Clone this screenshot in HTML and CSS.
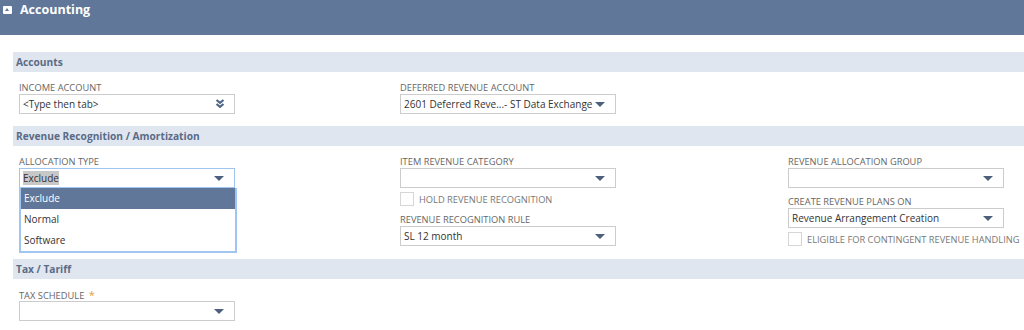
FILE: index.html
```html
<!DOCTYPE html>
<html lang="en">
<head>
	<meta charset="UTF-8">
	<title>Accounting</title>
	<link rel="stylesheet" href="styles.css">
</head>
<body>
<div class="tab-head">
    <i class="icon-collapse"></i>
    <span>Accounting</span>
</div>
<div class="tab-body">
    <div class="section">
        <div class="section-title">Accounts</div>
        <div class="section-grid">
            <div class="col">
                <div class="field">
                    <label>INCOME ACCOUNT</label>
                    <div class="input">
                        <span>&lt;Type then tab&gt;</span>
                        <svg class="icon-dbl" width="10" height="10" viewBox="0 0 10 10"><path d="M1.5 1 L5 3.8 L8.5 1 M1.5 5 L5 7.8 L8.5 5" fill="none" stroke="#4f6686" stroke-width="2.2"/></svg>
                    </div>
                </div>
            </div>
            <div class="col">
                <div class="field">
                    <label>DEFERRED REVENUE ACCOUNT</label>
                    <div class="input">
                        <span>2601 Deferred Reve...- ST Data Exchange</span>
                        <i class="arrow"></i>
                    </div>
                </div>
            </div>
            <div class="col"></div>
        </div>
    </div>

    <div class="section">
        <div class="section-title">Revenue Recognition / Amortization</div>
        <div class="section-grid">
            <div class="col">
                <div class="field drop-wrap">
                    <label>ALLOCATION TYPE</label>
                    <div class="input focus">
                        <span class="sel">Exclude</span>
                        <i class="arrow"></i>
                    </div>
                    <ul class="drop-list">
                        <li class="current">Exclude</li>
                        <li>Normal</li>
                        <li>Software</li>
                    </ul>
                </div>
            </div>
            <div class="col">
                <div class="field">
                    <label>ITEM REVENUE CATEGORY</label>
                    <div class="input">
                        <span></span>
                        <i class="arrow"></i>
                    </div>
                </div>
                <div class="check">
                    <i class="box"></i>
                    <span>HOLD REVENUE RECOGNITION</span>
                </div>
                <div class="field">
                    <label>REVENUE RECOGNITION RULE</label>
                    <div class="input">
                        <span>SL 12 month</span>
                        <i class="arrow"></i>
                    </div>
                </div>
            </div>
            <div class="col">
                <div class="field">
                    <label>REVENUE ALLOCATION GROUP</label>
                    <div class="input">
                        <span></span>
                        <i class="arrow"></i>
                    </div>
                </div>
                <div class="field">
                    <label>CREATE REVENUE PLANS ON</label>
                    <div class="input">
                        <span>Revenue Arrangement Creation</span>
                        <i class="arrow"></i>
                    </div>
                </div>
                <div class="check">
                    <i class="box"></i>
                    <span>ELIGIBLE FOR CONTINGENT REVENUE HANDLING</span>
                </div>
            </div>
        </div>
    </div>

    <div class="section">
        <div class="section-title">Tax / Tariff</div>
        <div class="section-grid">
            <div class="col">
                <div class="field">
                    <label>TAX SCHEDULE <em>*</em></label>
                    <div class="input">
                        <span></span>
                        <i class="arrow"></i>
                    </div>
                </div>
            </div>
        </div>
    </div>
</div>
</body>
</html>
```

FILE: styles.css
```css
body,div,ul,li,label,span{
    margin: 0;
    padding: 0;
}
body{
    background: #fff;
    font-family: "Open Sans", "Liberation Sans", sans-serif;
    font-size: 10px;
    color: #333;
}
i,em{
    font-style: normal;
}
ul{
    list-style: none;
}
.tab-head{
    height: 35px;
    background: #607799;
    display: flex;
    align-items: flex-start;
    padding: 0 0 0 3px;
}
.tab-head span{
    color: #fff;
    font-weight: bold;
    font-size: 12.5px;
    line-height: 20px;
    margin-left: 8px;
}
.icon-collapse{
    display: block;
    width: 9px;
    height: 8px;
    margin-top: 6px;
    background: #fff;
    border-radius: 1px;
    position: relative;
}
.icon-collapse:after{
    content: "";
    position: absolute;
    left: 2px;
    top: 2px;
    border-left: 2.5px solid transparent;
    border-right: 2.5px solid transparent;
    border-bottom: 3px solid #607799;
}
.tab-body{
    padding: 17px 0 0 13px;
}
.section-title{
    height: 20px;
    line-height: 20px;
    background: #e0e6ef;
    color: #5a6b87;
    font-weight: bold;
    font-size: 10.2px;
    padding-left: 3px;
}
.section-grid{
    display: grid;
    grid-template-columns: 381px 388px auto;
    padding: 9px 0 12px 6px;
}
.field{
    display: flex;
    flex-direction: column;
    width: 216px;
}
.field + .field{
    margin-top: 7px;
}
.field label{
    display: block;
    height: 13px;
    line-height: 13px;
    font-size: 9.3px;
    color: #666;
}
.field label em{
    color: #e8a13a;
    font-size: 11px;
    margin-left: 2px;
}
.input{
    height: 20px;
    box-sizing: border-box;
    border: 1px solid #ccc;
    display: flex;
    align-items: center;
    justify-content: space-between;
    padding: 0 8px 0 3px;
    background: #fff;
}
.input span{
    white-space: nowrap;
    overflow: hidden;
}
.input.focus{
    border-color: #9fc5f0;
}
.input .sel{
    background: #c8c8c8;
}
.arrow{
    flex: none;
    width: 0;
    height: 0;
    border-left: 5px solid transparent;
    border-right: 5px solid transparent;
    border-top: 5px solid #4c607e;
    margin-right: 2px;
}
.icon-dbl{
    flex: none;
    margin-right: 1px;
}
.check{
    display: flex;
    align-items: center;
    height: 16px;
    margin: 3px 0 6px;
}
.check:last-child{
    margin-bottom: 0;
}
.check .box{
    display: block;
    width: 12px;
    height: 12px;
    border: 1px solid #d6d6d6;
    margin-right: 5px;
}
.check span{
    font-size: 9.3px;
    color: #777;
    white-space: nowrap;
}
.drop-wrap{
    position: relative;
}
.drop-list{
    position: absolute;
    top: 33px;
    left: 0;
    width: 218px;
    box-sizing: border-box;
    border: 2px solid #9fc5f0;
    border-top: 0;
    background: #fff;
    z-index: 2;
}
.drop-list li{
    height: 21px;
    line-height: 21px;
    padding-left: 3px;
}
.drop-list li.current{
    background: #607799;
    color: #fff;
}
```
